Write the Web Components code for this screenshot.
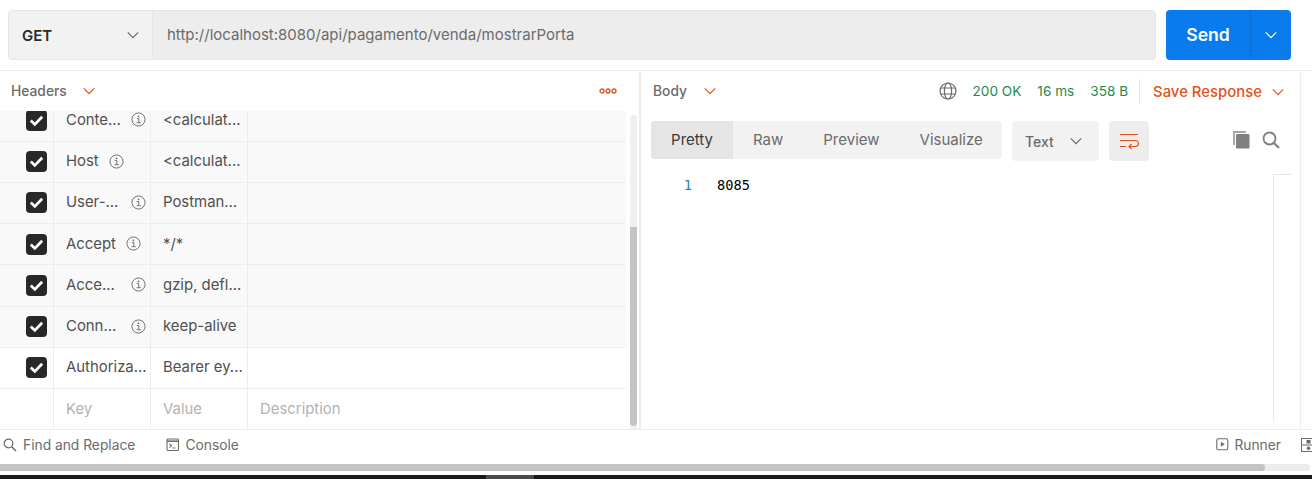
<!DOCTYPE html>
<html>
<head>
<meta charset="utf-8">
<title>Postman</title>
<style>
    html, body {
        margin: 0;
        padding: 0;
        background: #fff;
        overflow: hidden;
    }
    body {
        width: 1312px;
        height: 479px;
        font-family: Inter, "Liberation Sans", sans-serif;
        font-size: 15px;
        color: #505050;
    }
</style>
</head>
<body>
<pm-app>
    <pm-url-bar method="GET" url="http://localhost:8080/api/pagamento/venda/mostrarPorta"></pm-url-bar>
    <pm-split>
        <pm-request slot="left">
            <pm-header-row name="Conte..." value="&lt;calculat..." shade></pm-header-row>
            <pm-header-row name="Host" value="&lt;calculat..." gap="10" shade></pm-header-row>
            <pm-header-row name="User-..." value="Postman..." shade></pm-header-row>
            <pm-header-row name="Accept" value="*/*" gap="10" shade></pm-header-row>
            <pm-header-row name="Acce..." value="gzip, defl..." shade></pm-header-row>
            <pm-header-row name="Conn..." value="keep-alive" shade></pm-header-row>
            <pm-header-row name="Authoriza..." value="Bearer ey..." noinfo></pm-header-row>
            <pm-header-row name="Key" value="Value" desc="Description" empty></pm-header-row>
        </pm-request>
        <pm-response slot="right"></pm-response>
    </pm-split>
    <pm-footer></pm-footer>
    <pm-window-edge></pm-window-edge>
</pm-app>

<script>
const ICONS = {
    chevron: '<path d="M0.8 3.4 L6 8.6 L11.2 3.4" fill="none" stroke="currentColor" stroke-width="1.2"/>',
    info: '<circle cx="8" cy="8" r="7" fill="none" stroke="currentColor" stroke-width="1"/><circle cx="8" cy="4.7" r="0.9" fill="currentColor"/><path d="M6.2 7 H8.3 V11.2 M6 11.4 H10.4" fill="none" stroke="currentColor" stroke-width="1"/>',
    check: '<path d="M4.8 10.6 L8.8 14.4 L16.2 6.8" fill="none" stroke="currentColor" stroke-width="2.8"/>',
    dots: '<g fill="none" stroke="currentColor" stroke-width="1.3"><circle cx="3" cy="4" r="2"/><circle cx="9" cy="4" r="2"/><circle cx="15" cy="4" r="2"/></g>',
    globe: '<g fill="none" stroke="currentColor" stroke-width="1.2"><circle cx="9" cy="9" r="8"/><ellipse cx="9" cy="9" rx="3.6" ry="8"/><path d="M1.6 6 H16.4 M1.6 12 H16.4"/></g>',
    wrap: '<g fill="none" stroke="currentColor" stroke-width="1.2"><path d="M0 1.5 H18 M0 7.5 H15 M0 13.5 H6"/><path d="M15 7.5 Q18.4 7.5 18.4 10.5 Q18.4 13.5 15 13.5 H9 M11.6 11 L9 13.5 L11.6 16"/></g>',
    copy: '<path d="M2 14 V1 H14" fill="none" stroke="#a6a6a6" stroke-width="2"/><rect x="4" y="3" width="13.5" height="14.5" rx="1" fill="#808080"/>',
    search: '<g fill="none" stroke="currentColor"><circle cx="7.5" cy="7.5" r="6" stroke-width="1.8"/><path d="M12 12 L17 17" stroke-width="2.2"/></g>',
    find: '<g fill="none" stroke="currentColor"><circle cx="5.5" cy="5.5" r="4.3" stroke-width="1.2"/><path d="M8.7 8.7 L13 13" stroke-width="1.6"/></g>',
    console: '<g fill="none" stroke="currentColor" stroke-width="1.1"><rect x="1" y="1" width="11.5" height="11.5" rx="1"/><path d="M1 3.2 H12.5" stroke-width="1.6"/><path d="M3.5 6 L5.5 7.8 L3.5 9.6 M6.5 10 H9.5"/></g>',
    runner: '<g stroke="currentColor"><rect x="0.8" y="0.8" width="11" height="11" rx="1.5" fill="none" stroke-width="1.1"/><path d="M4.8 3.8 L8.8 6.3 L4.8 8.8 Z" fill="currentColor" stroke="none"/></g>',
    panes: '<g><rect x="0.5" y="0.5" width="13" height="13" fill="none" stroke="currentColor"/><path d="M0.5 7 H13.5" stroke="currentColor"/><rect x="5.5" y="2" width="4" height="3.5" fill="currentColor"/><circle cx="7.5" cy="10.2" r="1.8" fill="currentColor"/></g>'
};

const esc = (s) => (s || '').replace(/&/g, '&amp;').replace(/</g, '&lt;');

class PmIcon extends HTMLElement {
    constructor() {
        super();
        this.attachShadow({mode: 'open'});
    }

    connectedCallback() {
        const name = this.getAttribute('name');
        const w = this.getAttribute('w') || 12;
        const h = this.getAttribute('h') || w;
        const box = this.getAttribute('box') || `0 0 ${w} ${h}`;
        this.shadowRoot.innerHTML = `
        <style>
            :host { display: inline-flex; flex: none; line-height: 0; }
        </style>
        <svg width="${w}" height="${h}" viewBox="${box}">${ICONS[name]}</svg>`;
    }
}

class PmApp extends HTMLElement {
    constructor() {
        super();
        this.attachShadow({mode: 'open'}).innerHTML = `
        <style>
            :host {
                display: flex;
                flex-direction: column;
                width: 1312px;
                height: 479px;
                overflow: hidden;
            }
        </style>
        <slot></slot>`;
    }
}

class PmUrlBar extends HTMLElement {
    constructor() {
        super();
        this.attachShadow({mode: 'open'});
    }

    connectedCallback() {
        this.shadowRoot.innerHTML = `
        <style>
            :host {
                display: flex;
                flex: none;
                height: 71px;
                box-sizing: border-box;
                padding: 10px 21px 10px 8px;
                border-bottom: 1px solid #ededed;
                gap: 10px;
            }
            .input {
                display: flex;
                width: 1148px;
                height: 50px;
                box-sizing: border-box;
                border: 1px solid #e6e6e6;
                border-radius: 4px;
                background: #ededed;
                overflow: hidden;
            }
            .method {
                display: flex;
                align-items: center;
                justify-content: space-between;
                width: 144px;
                box-sizing: border-box;
                padding: 0 13px 0 13px;
                background: #f2f2f2;
                border-right: 1px solid #e6e6e6;
                font-size: 15px;
                font-weight: 600;
                color: #2b2b2b;
            }
            .method pm-icon { color: #6b6b6b; }
            .url {
                padding-left: 14px;
                line-height: 48px;
                font-size: 15px;
                color: #6b6b6b;
            }
            .send {
                display: flex;
                width: 125px;
                height: 50px;
                border-radius: 4px;
                background: #097bed;
                color: #fff;
            }
            .label {
                width: 84px;
                text-align: center;
                line-height: 50px;
                font-size: 17.6px;
                font-weight: 600;
                border-right: 1px solid #0a6fd4;
            }
            .arrow {
                flex: 1;
                display: flex;
                align-items: center;
                justify-content: center;
            }
        </style>
        <div class="input">
            <div class="method">${esc(this.getAttribute('method'))}<pm-icon name="chevron"></pm-icon></div>
            <div class="url">${esc(this.getAttribute('url'))}</div>
        </div>
        <div class="send">
            <div class="label">Send</div>
            <div class="arrow"><pm-icon name="chevron"></pm-icon></div>
        </div>`;
    }
}

class PmSplit extends HTMLElement {
    constructor() {
        super();
        this.attachShadow({mode: 'open'}).innerHTML = `
        <style>
            :host {
                display: flex;
                flex: none;
                height: 358px;
                border-bottom: 1px solid #ededed;
            }
            .left {
                display: block;
                width: 639px;
                flex: none;
                border-right: 2px solid #ededed;
            }
            .right {
                display: block;
                width: 659px;
                flex: none;
                border-right: 1px solid #ededed;
            }
        </style>
        <div class="left"><slot name="left"></slot></div>
        <div class="right"><slot name="right"></slot></div>`;
    }
}

class PmRequest extends HTMLElement {
    constructor() {
        super();
        this.attachShadow({mode: 'open'}).innerHTML = `
        <style>
            :host {
                display: flex;
                flex-direction: column;
                height: 358px;
            }
            .head {
                display: flex;
                flex: none;
                align-items: center;
                height: 40px;
                padding: 0 22px 0 11px;
                font-size: 13.8px;
                font-weight: 500;
                color: #6b6b6b;
            }
            .title { margin-bottom: 1px; }
            .head .chev {
                margin-left: 16px;
                color: #e05320;
            }
            .head .more {
                margin-left: auto;
                color: #e05320;
            }
            .body {
                display: flex;
                flex: 1;
                min-height: 0;
            }
            .table {
                width: 626px;
                height: 318px;
                overflow: hidden;
            }
            .rows {
                margin-top: -10.75px;
            }
            .track {
                width: 7px;
                height: 314px;
                margin: 4px 0 0 4px;
                padding-top: 112px;
                box-sizing: border-box;
                border-radius: 4px 4px 0 0;
                background: #f0f0f0;
            }
            .thumb {
                height: 199px;
                border-radius: 0 0 4px 4px;
                background: #c4c4c4;
            }
        </style>
        <div class="head">
            <span class="title">Headers</span>
            <pm-icon class="chev" name="chevron"></pm-icon>
            <pm-icon class="more" name="dots" w="18" h="8"></pm-icon>
        </div>
        <div class="body">
            <div class="table"><div class="rows"><slot></slot></div></div>
            <div class="track"><div class="thumb"></div></div>
        </div>`;
    }
}

class PmHeaderRow extends HTMLElement {
    constructor() {
        super();
        this.attachShadow({mode: 'open'});
    }

    connectedCallback() {
        const empty = this.hasAttribute('empty');
        const info = !empty && !this.hasAttribute('noinfo');
        const gap = this.getAttribute('gap');
        this.shadowRoot.innerHTML = `
        <style>
            :host {
                display: grid;
                grid-template-columns: 54px 97px 97px 1fr;
                height: 41.25px;
                box-sizing: border-box;
                border-bottom: 1px solid #ededed;
                font-size: 14.9px;
                color: ${empty ? '#b3b3b3' : '#505050'};
                background: ${this.hasAttribute('shade') ? '#f9f9f9' : '#fff'};
            }
            .cell {
                display: flex;
                align-items: center;
                min-width: 0;
                padding-bottom: 1px;
                box-sizing: border-box;
                white-space: nowrap;
                border-right: 1px solid #ededed;
            }
            .cell:last-child { border-right: 0; }
            .check { padding: 0 0 0 26px; }
            .box {
                display: flex;
                width: 21px;
                height: 21px;
                border-radius: 4px;
                background: #282828;
                color: #fff;
            }
            .key { padding-left: 12px; padding-right: 4px; }
            .key pm-icon {
                margin-left: ${gap ? gap + 'px' : 'auto'};
                color: #6b6b6b;
            }
            .value { padding-left: 12px; }
            .desc { padding-left: 12px; }
        </style>
        <div class="cell check">${empty ? '' : '<div class="box"><pm-icon name="check" w="21" h="21"></pm-icon></div>'}</div>
        <div class="cell key">${esc(this.getAttribute('name'))}${info ? '<pm-icon name="info" w="15" h="15" box="0 0 16 16"></pm-icon>' : ''}</div>
        <div class="cell value">${esc(this.getAttribute('value'))}</div>
        <div class="cell desc">${esc(this.getAttribute('desc'))}</div>`;
    }
}

class PmResponse extends HTMLElement {
    constructor() {
        super();
        this.attachShadow({mode: 'open'}).innerHTML = `
        <style>
            :host {
                display: flex;
                flex-direction: column;
                height: 358px;
            }
            .head {
                display: flex;
                flex: none;
                align-items: center;
                height: 40px;
                padding: 0 16px 0 12px;
                font-size: 13.8px;
                font-weight: 500;
                color: #6b6b6b;
            }
            .title { margin-bottom: 1px; }
            .head .chev {
                margin-left: 17px;
                color: #e05320;
            }
            .status {
                display: flex;
                align-items: center;
                margin-left: auto;
                font-size: 13.6px;
                font-weight: 400;
                color: #1f8a4d;
            }
            .status pm-icon { color: #6b6b6b; margin-right: 16px; }
            .status span + span { margin-left: 16px; }
            .save {
                display: flex;
                align-items: center;
                height: 25px;
                margin: 1px 0 0 11px;
                padding-left: 13px;
                border-left: 1px solid #e6e6e6;
                font-size: 14.9px;
                font-weight: 500;
                color: #e05320;
            }
            .save pm-icon { margin-left: 10px; }
            .tools {
                display: flex;
                flex: none;
                align-items: flex-start;
                height: 40px;
                margin-top: 10px;
                padding-left: 10px;
            }
            .tabs {
                display: flex;
                height: 38px;
                width: 351px;
                border-radius: 4px;
                background: #f2f2f2;
                overflow: hidden;
                font-size: 15px;
                line-height: 38px;
                color: #6b6b6b;
            }
            .tabs div { flex: none; padding: 0 20px; }
            .tabs .active {
                width: 82px;
                box-sizing: border-box;
                padding: 0;
                text-align: center;
                background: #e5e5e5;
                color: #3b3b3b;
            }
            .select {
                display: flex;
                align-items: center;
                justify-content: space-between;
                width: 87px;
                height: 40px;
                box-sizing: border-box;
                margin-left: 10px;
                padding: 0 17px 0 13px;
                border-radius: 4px;
                background: #f2f2f2;
                font-size: 14px;
                font-weight: 500;
                color: #6b6b6b;
            }
            .wrap {
                display: flex;
                align-items: center;
                justify-content: center;
                width: 40px;
                height: 40px;
                margin-left: 10px;
                border-radius: 4px;
                background: #ededed;
                color: #e05320;
            }
            .side {
                display: flex;
                align-items: center;
                gap: 12px;
                height: 38px;
                margin-left: 83px;
                color: #808080;
            }
            .code {
                display: flex;
                flex: 1;
                min-height: 0;
                padding-top: 13px;
            }
            .lines {
                width: 51px;
                padding-top: 3px;
                text-align: right;
                font: 13.7px/17px "DejaVu Sans Mono", "Liberation Mono", monospace;
                color: #1a85b8;
            }
            .text {
                flex: 1;
                padding: 3px 0 0 25px;
                font: 13.7px/17px "DejaVu Sans Mono", "Liberation Mono", monospace;
                color: #000;
            }
            .mini {
                width: 18px;
                height: 246px;
                margin-right: 8px;
                border: 1px solid #e6e6e6;
                border-width: 1px 0 0 1px;
            }
        </style>
        <div class="head">
            <span class="title">Body</span>
            <pm-icon class="chev" name="chevron"></pm-icon>
            <div class="status">
                <pm-icon name="globe" w="18" h="18"></pm-icon>
                <span>200 OK</span><span>16 ms</span><span>358 B</span>
            </div>
            <div class="save">Save Response<pm-icon name="chevron"></pm-icon></div>
        </div>
        <div class="tools">
            <div class="tabs">
                <div class="active">Pretty</div>
                <div>Raw</div>
                <div>Preview</div>
                <div>Visualize</div>
            </div>
            <div class="select">Text<pm-icon name="chevron"></pm-icon></div>
            <div class="wrap"><pm-icon name="wrap" w="19" h="17"></pm-icon></div>
            <div class="side">
                <pm-icon name="copy" w="18" h="18"></pm-icon>
                <pm-icon name="search" w="18" h="18"></pm-icon>
            </div>
        </div>
        <div class="code">
            <div class="lines">1</div>
            <div class="text">8085</div>
            <div class="mini"></div>
        </div>`;
    }
}

class PmFooter extends HTMLElement {
    constructor() {
        super();
        this.attachShadow({mode: 'open'}).innerHTML = `
        <style>
            :host {
                display: flex;
                flex: none;
                align-items: center;
                height: 34px;
                box-sizing: border-box;
                padding: 0 0 5px 3px;
                font-size: 13.8px;
                color: #6b6b6b;
            }
            .item {
                display: flex;
                align-items: center;
                gap: 6px;
                white-space: nowrap;
            }
            .console { margin-left: 31px; gap: 5px; }
            .runner { margin-left: auto; gap: 5px; }
            .panes {
                margin: 0 -3px 0 20px;
            }
        </style>
        <div class="item"><pm-icon name="find" w="14" h="14"></pm-icon>Find and Replace</div>
        <div class="item console"><pm-icon name="console" w="14" h="14"></pm-icon>Console</div>
        <div class="item runner"><pm-icon name="runner" w="13" h="13"></pm-icon>Runner</div>
        <pm-icon class="panes" name="panes" w="14" h="14"></pm-icon>`;
    }
}

class PmWindowEdge extends HTMLElement {
    constructor() {
        super();
        this.attachShadow({mode: 'open'}).innerHTML = `
        <style>
            :host {
                display: block;
                flex: none;
            }
            .track {
                width: 1310px;
                height: 7px;
                border-radius: 0 4px 4px 0;
                background: #ececec;
            }
            .thumb {
                width: 1265px;
                height: 7px;
                border-radius: 0 3px 3px 0;
                background: #c4c4c4;
            }
            .task {
                height: 4px;
                margin-top: 4px;
                padding-left: 486px;
                background: #1a1a1a;
            }
            .task div {
                width: 48px;
                height: 4px;
                background: #4a4a4a;
            }
        </style>
        <div class="track"><div class="thumb"></div></div>
        <div class="task"><div></div></div>`;
    }
}

customElements.define('pm-icon', PmIcon);
customElements.define('pm-app', PmApp);
customElements.define('pm-url-bar', PmUrlBar);
customElements.define('pm-split', PmSplit);
customElements.define('pm-request', PmRequest);
customElements.define('pm-header-row', PmHeaderRow);
customElements.define('pm-response', PmResponse);
customElements.define('pm-footer', PmFooter);
customElements.define('pm-window-edge', PmWindowEdge);
</script>
</body>
</html>
